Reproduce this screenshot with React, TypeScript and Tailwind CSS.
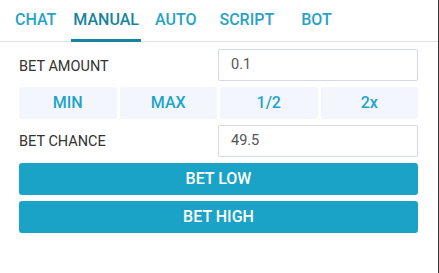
import React from "react";

export default function App() {
  const tabs = [
    { label: "CHAT", ml: "ml-[13px]", active: false },
    { label: "MANUAL", ml: "ml-[13px]", active: true },
    { label: "AUTO", ml: "ml-[12px]", active: false },
    { label: "SCRIPT", ml: "ml-[19px]", active: false },
    { label: "BOT", ml: "ml-[23px]", active: false },
  ];
  return (
    <div
      className="w-[439px] h-[273px] bg-white border-r border-[#333] flex flex-col"
      style={{ fontFamily: "Roboto, 'Liberation Sans', sans-serif" }}
    >
      <div className="h-[42px] border-b border-[#dfe2e8] flex items-stretch">
        {tabs.map((t) => (
          <div
            key={t.label}
            className={`${t.ml} px-[2px] flex items-center text-[16px] font-medium relative ${
              t.active ? "text-[#17849e]" : "text-[#27a3c7]"
            }`}
          >
            <span className="-mt-[2px]">{t.label}</span>
            {t.active && (
              <div className="absolute left-0 right-0 bottom-[-1px] h-[3px] bg-[#17849e]" />
            )}
          </div>
        ))}
      </div>
      <div className="px-[19px] pr-[20px] pt-[7px] flex flex-col">
        <div className="flex items-center justify-between h-[32px]">
          <span className="text-[14.5px] text-[#333] pt-[3px]">BET AMOUNT</span>
          <div className="w-[200px] h-[32px] border border-[#d3d9e6] rounded-[2px] flex items-center pl-[12px] text-[14.5px] text-[#555]">
            0.1
          </div>
        </div>
        <div className="grid grid-cols-4 gap-[3px] mt-[6px]">
          {["MIN", "MAX", "1/2", "2x"].map((b) => (
            <div
              key={b}
              className="h-[32px] bg-[#f4f6fd] rounded-[3px] flex items-center justify-center text-[16px] font-medium text-[#1ea4c9]"
            >
              {b}
            </div>
          ))}
        </div>
        <div className="flex items-center justify-between h-[32px] mt-[6px]">
          <span className="text-[14.5px] text-[#333] pt-[2px]">BET CHANCE</span>
          <div className="w-[200px] h-[32px] border border-[#d3d9e6] rounded-[2px] flex items-center pl-[12px] text-[14.5px] text-[#555]">
            49.5
          </div>
        </div>
        <div className="mt-[6px] h-[32px] bg-[#1aa3c7] rounded-[3px] flex items-center justify-center text-white text-[16px] font-medium">
          BET LOW
        </div>
        <div className="mt-[6px] h-[32px] bg-[#1aa3c7] rounded-[3px] flex items-center justify-center text-white text-[16px] font-medium">
          BET HIGH
        </div>
      </div>
    </div>
  );
}
